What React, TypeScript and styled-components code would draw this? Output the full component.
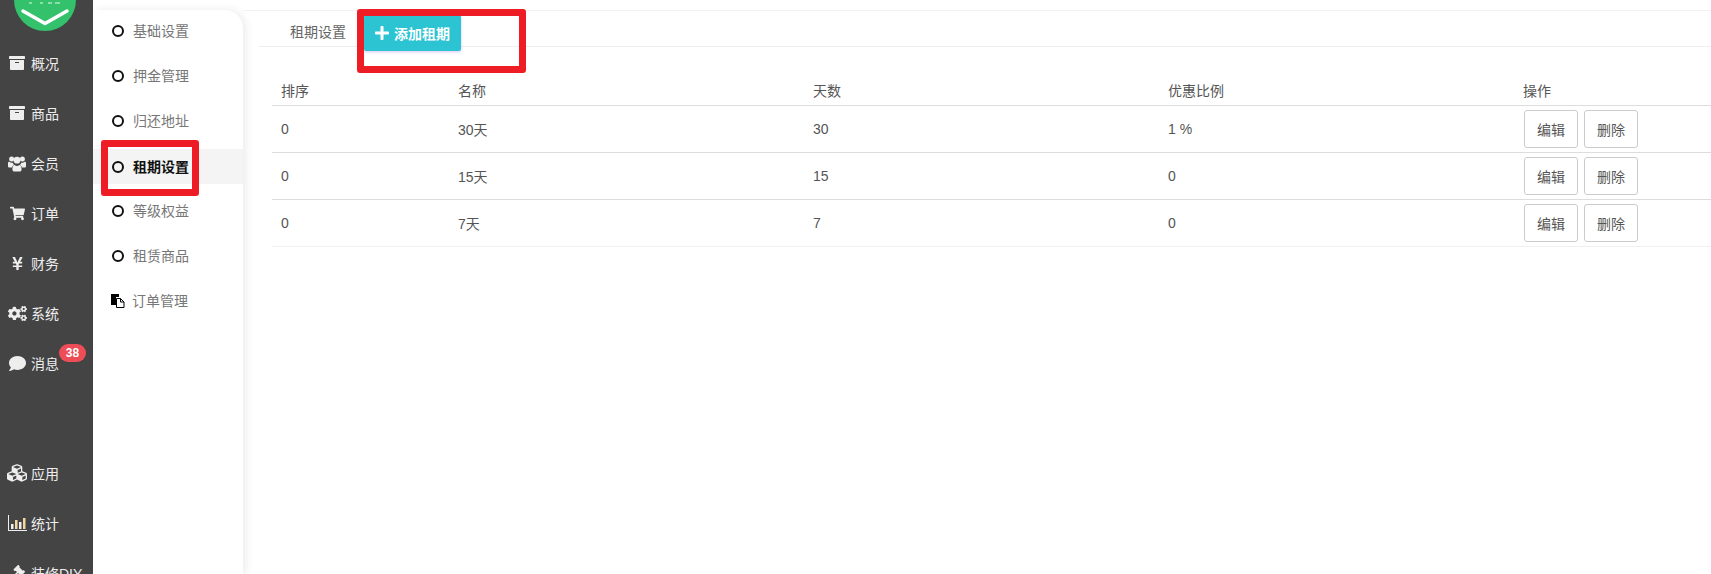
import { ReactNode } from "react";
import styled, { createGlobalStyle } from "styled-components";
import { FaArchive, FaShoppingCart, FaYenSign, FaCogs, FaComment, FaCubes, FaGavel, FaPlus } from "react-icons/fa";

const GlobalStyle = createGlobalStyle`
  html, body {
    margin: 0;
    padding: 0;
    height: 574px;
    overflow: hidden;
    background: #fff;
    font-family: "Liberation Sans", "Noto Sans CJK SC", sans-serif;
  }
`;

const Page = styled.div`
  position: relative;
  display: flex;
  width: 1711px;
  height: 574px;
  overflow: hidden;
`;

const Rail = styled.nav`
  flex: 0 0 93px;
  height: 574px;
  background: #444;
  color: #fff;
  overflow: hidden;
`;

const Logo = styled.svg`
  display: block;
  margin-left: 14px;
`;

const RailList = styled.div`
  margin-top: 7px;
`;

const RailItem = styled.div<{ $gap?: number }>`
  position: relative;
  display: flex;
  align-items: center;
  height: 50px;
  margin-top: ${(p) => p.$gap ?? 0}px;
  font-size: 14px;
  color: #eee;
`;

const RailIcon = styled.span<{ $size: number }>`
  flex: 0 0 31px;
  box-sizing: border-box;
  padding-left: 3px;
  display: flex;
  justify-content: center;
  font-size: ${(p) => p.$size}px;
`;

const Badge = styled.span`
  position: absolute;
  left: 59px;
  top: 6px;
  width: 27px;
  height: 18px;
  border-radius: 9px;
  background: #ed4d56;
  color: #fff;
  font-size: 12px;
  font-weight: 700;
  line-height: 18px;
  text-align: center;
`;

const SubMenu = styled.aside`
  flex: 0 0 150px;
  margin-top: 10px;
  background: #fff;
  border-top-right-radius: 18px;
  box-shadow: 3px 0 8px rgba(0, 0, 0, 0.08);
  z-index: 1;
`;

const SubItem = styled.div<{ $active?: boolean }>`
  box-sizing: border-box;
  display: flex;
  align-items: center;
  height: ${(p) => (p.$active ? 35 : 45)}px;
  margin: ${(p) => (p.$active ? "6px 0 4px" : "0")};
  padding: 0 0 2px 19px;
  font-size: 14px;
  color: ${(p) => (p.$active ? "#111" : "#777")};
  font-weight: ${(p) => (p.$active ? 700 : 400)};
  background: ${(p) => (p.$active ? "#f4f4f4" : "transparent")};
  &:first-child {
    height: 41px;
    margin-bottom: 2px;
  }
`;

const Ring = styled.span`
  flex: 0 0 auto;
  box-sizing: border-box;
  width: 12px;
  height: 12px;
  margin: 2px 9px 0 0;
  border: 2px solid #111;
  border-radius: 50%;
`;

const FileIcon = styled.svg`
  flex: 0 0 auto;
  margin: 2px 7px 0 -1px;
`;

const Main = styled.main`
  flex: 1;
  min-width: 0;
  margin-top: 10px;
  border-top: 1px solid #f2f2f2;
`;

const Tabs = styled.div`
  display: flex;
  align-items: flex-start;
  height: 35px;
  margin-left: 16px;
  padding-left: 31px;
  border-bottom: 1px solid #eee;
`;

const Tab = styled.span`
  font-size: 14px;
  color: #666;
  line-height: 20px;
  padding-top: 11px;
  margin-right: 18px;
`;

const AddButton = styled.button`
  display: flex;
  align-items: center;
  gap: 4px;
  flex: 0 0 auto;
  height: 36px;
  margin-top: 4px;
  padding: 0 11px 0 10px;
  border: 0;
  border-radius: 2px;
  background: #2cc4d3;
  color: #fff;
  font: 700 14px "Liberation Sans", "Noto Sans CJK SC", sans-serif;
  box-shadow: 0 1px 3px rgba(120, 70, 220, 0.3);
`;

const Table = styled.table`
  width: 1439px;
  margin: 32px 0 0 29px;
  border-collapse: collapse;
  table-layout: fixed;
  font-size: 14px;
  color: #555;
`;

const Th = styled.th<{ $w: number }>`
  box-sizing: border-box;
  width: ${(p) => p.$w}px;
  height: 26px;
  padding: 0 9px 4px;
  font-weight: 400;
  text-align: left;
  border-bottom: 1px solid #ddd;
`;

const Td = styled.td`
  height: 46px;
  padding: 0 9px;
  border-bottom: 1px solid #ddd;
  tr:last-child & {
    border-bottom-color: #f0f0f0;
  }
`;

const Actions = styled.div`
  display: flex;
  gap: 6px;
  margin-left: 1px;
`;

const RowButton = styled.button`
  flex: 0 0 54px;
  height: 38px;
  padding: 0;
  background: #fff;
  border: 1px solid #ccc;
  border-radius: 3px;
  color: #555;
  font: 400 14px "Liberation Sans", "Noto Sans CJK SC", sans-serif;
`;

const Marker = styled.div<{ $area: "menu" | "add" }>`
  position: absolute;
  box-sizing: border-box;
  left: ${(p) => (p.$area === "menu" ? 101 : 357)}px;
  top: ${(p) => (p.$area === "menu" ? 140 : 9)}px;
  width: ${(p) => (p.$area === "menu" ? 98 : 169)}px;
  height: ${(p) => (p.$area === "menu" ? 56 : 64)}px;
  border: 7px solid #ee1c25;
  border-radius: 3px;
  z-index: 3;
`;

const UsersIcon = () => (
  <svg width="18" height="17" viewBox="0 0 18 17" fill="currentColor">
    <circle cx="3.6" cy="4" r="2.5" />
    <circle cx="14.4" cy="4" r="2.5" />
    <circle cx="9" cy="5.2" r="3.4" />
    <path d="M0 8.2c0-1 .6-1.4 1.3-1.4.7.6 1.6 1 2.6 1 .3 0 .6 0 .9-.1.2.9.7 1.7 1.3 2.3-1 .5-1.8 1.4-2.2 2.5H1.4C.6 12.5 0 12 0 11.2zM18 8.2c0-1-.6-1.4-1.3-1.4-.7.6-1.6 1-2.6 1-.3 0-.6 0-.9-.1-.2.9-.7 1.7-1.3 2.3 1 .5 1.8 1.4 2.2 2.5h2.5c.8 0 1.4-.5 1.4-1.3z" />
    <path d="M4.4 14.2c0-2.3 1-4.1 2.3-4.1.6.5 1.4.9 2.3.9s1.7-.4 2.3-.9c1.3 0 2.3 1.8 2.3 4.1 0 1.5-.9 2.4-2.2 2.4H6.600c-1.3 0-2.2-.9-2.2-2.4z" />
  </svg>
);

const ChartIcon = () => (
  <svg width="19" height="16" viewBox="0 0 19 16" fill="currentColor">
    <path d="M0 0h1v15h18v1H0z" />
    <rect x="3" y="9" width="2.5" height="5" />
    <rect x="7" y="5" width="2.5" height="9" fill="#f0d9a0" />
    <rect x="11" y="7" width="2.5" height="7" />
    <rect x="15" y="3" width="2.5" height="11" fill="#f0d9a0" />
  </svg>
);

const railItems: { icon: ReactNode; size: number; label: string; gap?: number; badge?: string }[] = [
  { icon: <FaArchive />, size: 16, label: "概况" },
  { icon: <FaArchive />, size: 16, label: "商品" },
  { icon: <UsersIcon />, size: 18, label: "会员" },
  { icon: <FaShoppingCart />, size: 15, label: "订单" },
  { icon: <FaYenSign />, size: 15, label: "财务" },
  { icon: <FaCogs />, size: 19, label: "系统" },
  { icon: <FaComment />, size: 17, label: "消息", badge: "38" },
  { icon: <FaCubes />, size: 20, label: "应用", gap: 60 },
  { icon: <ChartIcon />, size: 16, label: "统计" },
  { icon: <FaGavel />, size: 16, label: "装修DIY" },
];

const subItems = ["基础设置", "押金管理", "归还地址", "租期设置", "等级权益", "租赁商品"];

const rows = [
  ["0", "30天", "30", "1 %"],
  ["0", "15天", "15", "0"],
  ["0", "7天", "7", "0"],
];

const columns: [string, number][] = [
  ["排序", 177],
  ["名称", 355],
  ["天数", 355],
  ["优惠比例", 355],
  ["操作", 197],
];

export default function App() {
  return (
    <Page>
      <GlobalStyle />
      <Rail>
        <Logo width="62" height="31" viewBox="0 0 62 31">
          <circle cx="31" cy="0" r="31" fill="#34c16b" />
          <path d="M15 3h3M26 3h3M34 3h4M41 3h5" stroke="#a8e6c2" strokeWidth="1.5" />
          <path d="M9 11 L31 23.5 L53 11" fill="none" stroke="#fff" strokeWidth="3.5" strokeLinecap="round" strokeLinejoin="round" />
        </Logo>
        <RailList>
          {railItems.map((item) => (
            <RailItem key={item.label} $gap={item.gap}>
              <RailIcon $size={item.size}>{item.icon}</RailIcon>
              {item.label}
              {item.badge && <Badge>{item.badge}</Badge>}
            </RailItem>
          ))}
        </RailList>
      </Rail>
      <SubMenu>
        {subItems.map((label) => (
          <SubItem key={label} $active={label === "租期设置"}>
            <Ring />
            {label}
          </SubItem>
        ))}
        <SubItem>
          <FileIcon width="14" height="14" viewBox="0 0 14 14">
            <path d="M0 0h8v3H5v8H0z" fill="#000" />
            <path d="M5.5 4.5h4l3.5 3.5v5.5H5.5z" fill="#fff" stroke="#000" />
            <path d="M9.5 4.5v3.5h3.5" fill="none" stroke="#000" />
          </FileIcon>
          订单管理
        </SubItem>
      </SubMenu>
      <Main>
        <Tabs>
          <Tab>租期设置</Tab>
          <AddButton>
            <FaPlus size={16} />
            添加租期
          </AddButton>
        </Tabs>
        <Table>
          <thead>
            <tr>
              {columns.map(([name, w]) => (
                <Th key={name} $w={w}>
                  {name}
                </Th>
              ))}
            </tr>
          </thead>
          <tbody>
            {rows.map((row, i) => (
              <tr key={i}>
                {row.map((cell, j) => (
                  <Td key={j}>{cell}</Td>
                ))}
                <Td>
                  <Actions>
                    <RowButton>编辑</RowButton>
                    <RowButton>删除</RowButton>
                  </Actions>
                </Td>
              </tr>
            ))}
          </tbody>
        </Table>
      </Main>
      <Marker $area="menu" />
      <Marker $area="add" />
    </Page>
  );
}
